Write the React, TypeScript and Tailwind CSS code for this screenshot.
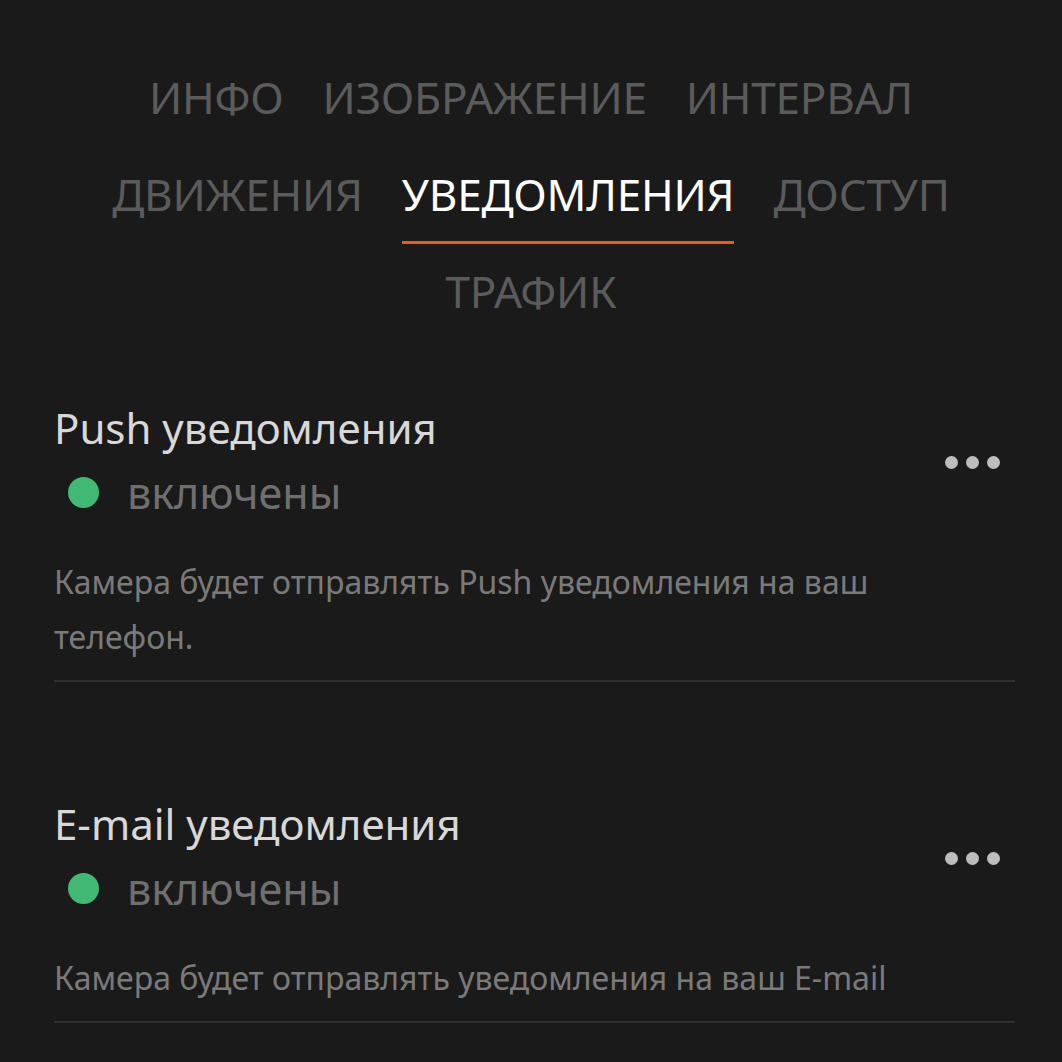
import { useState } from "react";

const tabs = ["ИНФО", "ИЗОБРАЖЕНИЕ", "ИНТЕРВАЛ", "ДВИЖЕНИЯ", "УВЕДОМЛЕНИЯ", "ДОСТУП", "ТРАФИК"];

type Channel = {
  title: string;
  enabled: boolean;
  description: string;
};

const channels: Channel[] = [
  {
    title: "Push уведомления",
    enabled: true,
    description: "Камера будет отправлять Push уведомления на ваш телефон.",
  },
  {
    title: "E-mail уведомления",
    enabled: true,
    description: "Камера будет отправлять уведомления на ваш E-mail",
  },
];

function MoreButton() {
  return (
    <button className="mt-[4px] flex items-center gap-[8px] pr-[15px]">
      <span className="block h-[13px] w-[13px] rounded-full bg-[#bdbdbd]" />
      <span className="block h-[13px] w-[13px] rounded-full bg-[#bdbdbd]" />
      <span className="block h-[13px] w-[13px] rounded-full bg-[#bdbdbd]" />
    </button>
  );
}

function ChannelBlock({ channel }: { channel: Channel }) {
  return (
    <section className="border-b-2 border-[#303030] pb-[16px]">
      <div className="flex items-center justify-between">
        <div className="flex flex-col">
          <h3 className="text-[42px] leading-none text-[#d8d8d8]">{channel.title}</h3>
          <div className="mt-[22px] flex items-center">
            <span className="ml-[14px] block h-[31px] w-[31px] rounded-full bg-[#41b873]" />
            <span className="ml-[28px] text-[43px] leading-none text-[#6f6f6f]">
              {channel.enabled ? "включены" : "выключены"}
            </span>
          </div>
        </div>
        <MoreButton />
      </div>
      <p className="mt-[40px] pr-[100px] text-[32px] leading-[55px] text-[#7a7a7a]">
        {channel.description}
      </p>
    </section>
  );
}

export default function App() {
  const [active, setActive] = useState("УВЕДОМЛЕНИЯ");

  return (
    <div
      className="min-h-screen w-full bg-[#1a1a1a]"
      style={{ fontFamily: '"Noto Sans", "Open Sans", sans-serif' }}
    >
      {/* Tabs */}
      <nav className="mx-auto flex max-w-[960px] flex-wrap justify-center gap-x-[39px] gap-y-[25px] pt-[75px]">
        {tabs.map((tab) => (
          <button key={tab} onClick={() => setActive(tab)} className="flex flex-col">
            <span
              className={
                tab === active
                  ? "text-[44px] leading-none tracking-[-0.2px] text-white"
                  : "text-[44px] leading-none tracking-[-0.2px] text-[#5b5b5b]"
              }
            >
              {tab}
            </span>
            <span
              className={
                tab === active
                  ? "mt-[25px] block h-[3px] w-full bg-[#e0601c]"
                  : "mt-[25px] block h-[3px] w-full bg-transparent"
              }
            />
          </button>
        ))}
      </nav>

      {/* Notification channels */}
      <div className="ml-[54px] mr-[47px] mt-[66px] flex flex-col gap-[121px]">
        {channels.map((c) => (
          <ChannelBlock key={c.title} channel={c} />
        ))}
      </div>
    </div>
  );
}
